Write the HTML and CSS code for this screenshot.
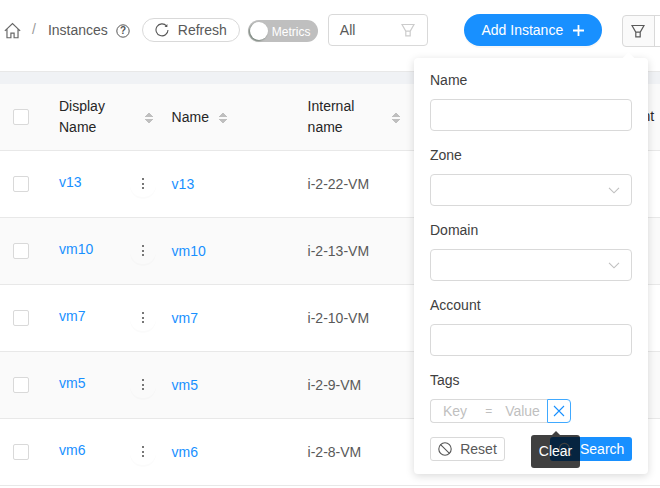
FILE: index.html
```html
<!DOCTYPE html>
<html lang="en">
<head>
    <meta charset="UTF-8">
    <title>Instances</title>
    <link rel="stylesheet" href="styles.css">
</head>
<body>
    <div class="toolbar">
        <svg class="home" viewBox="0 0 16 16" width="17" height="17"><path d="M0.8 8.4 8 1.4l7.2 7M2.8 6.8V14.8h3.7v-4.4h3v4.4h3.7V6.8" fill="none" stroke="#666" stroke-width="1.1"/></svg>
        <span class="sep">/</span>
        <span class="crumb">Instances</span>
        <svg class="help" viewBox="0 0 14 14" width="14" height="14"><circle cx="7" cy="7" r="6.2" fill="none" stroke="#555" stroke-width="1"/><text x="7" y="10.4" text-anchor="middle" class="help-mark">?</text></svg>
        <button class="refresh">
            <svg viewBox="0 0 14 14" width="14" height="14"><path d="M11.6 3A6 6 0 1 0 13 7" fill="none" stroke="#555" stroke-width="1.1"/><path d="M12.4 1v3H9.6z" fill="#555"/></svg>
            Refresh
        </button>
        <div class="switch"><span class="knob"></span><span class="switch-label">Metrics</span></div>
        <div class="select-all">
            <span>All</span>
            <svg viewBox="0 0 14 14" width="14" height="14"><path d="M1 1.5h12L9.2 8.2v4.6H4.8V8.2zM4.8 8.2h4.4" fill="none" stroke="#ccc" stroke-width="1.2"/></svg>
        </div>
        <button class="add">Add Instance <svg viewBox="0 0 11 11" width="11" height="11"><path d="M5.5 0v11M0 5.5h11" stroke="#fff" stroke-width="1.8"/></svg></button>
        <button class="filter-btn"><svg viewBox="0 0 14 14" width="14" height="14"><path d="M1 1.5h12L9.2 8.2v4.6H4.8V8.2zM4.8 8.2h4.4" fill="none" stroke="#595959" stroke-width="1.2"/></svg></button>
        <button class="columns-btn"></button>
    </div>
    <div class="band"></div>

    <table class="tabla">
        <thead>
            <tr>
                <th class="c-check"><span class="check"></span></th>
                <th class="c-display"><div class="th-in"><span>Display<br>Name</span><i class="sorter"></i></div></th>
                <th class="c-name"><div class="th-in"><span>Name</span><i class="sorter"></i></div></th>
                <th class="c-internal"><div class="th-in"><span>Internal<br>name</span><i class="sorter"></i></div></th>
                <th class="c-account"><span>Account</span></th>
            </tr>
        </thead>
        <tbody>
            <tr>
                <td><span class="check"></span></td>
                <td><div class="td-in"><a>v13</a><span class="dots"><i></i></span></div></td>
                <td><a>v13</a></td>
                <td>i-2-22-VM</td>
                <td></td>
            </tr>
            <tr class="alt">
                <td><span class="check"></span></td>
                <td><div class="td-in"><a>vm10</a><span class="dots"><i></i></span></div></td>
                <td><a>vm10</a></td>
                <td>i-2-13-VM</td>
                <td></td>
            </tr>
            <tr>
                <td><span class="check"></span></td>
                <td><div class="td-in"><a>vm7</a><span class="dots"><i></i></span></div></td>
                <td><a>vm7</a></td>
                <td>i-2-10-VM</td>
                <td></td>
            </tr>
            <tr class="alt">
                <td><span class="check"></span></td>
                <td><div class="td-in"><a>vm5</a><span class="dots"><i></i></span></div></td>
                <td><a>vm5</a></td>
                <td>i-2-9-VM</td>
                <td></td>
            </tr>
            <tr>
                <td><span class="check"></span></td>
                <td><div class="td-in"><a>vm6</a><span class="dots"><i></i></span></div></td>
                <td><a>vm6</a></td>
                <td>i-2-8-VM</td>
                <td></td>
            </tr>
        </tbody>
    </table>

    <div class="popover">
        <span class="arrow"></span>
        <label>Name</label>
        <div class="input"></div>
        <label>Zone</label>
        <div class="input"><svg viewBox="0 0 12 12" width="12" height="12"><path d="M1 3.8 6 8.8l5-5" fill="none" stroke="#bfbfbf" stroke-width="1.1"/></svg></div>
        <label>Domain</label>
        <div class="input"><svg viewBox="0 0 12 12" width="12" height="12"><path d="M1 3.8 6 8.8l5-5" fill="none" stroke="#bfbfbf" stroke-width="1.1"/></svg></div>
        <label>Account</label>
        <div class="input"></div>
        <label>Tags</label>
        <div class="tags">
            <div class="tag-box"><span class="tag-key">Key</span><span class="tag-eq">=</span><span class="tag-val">Value</span></div>
            <div class="tag-clear"><svg viewBox="0 0 12 12" width="12" height="12"><path d="M1 1l10 10M11 1 1 11" stroke="#1890ff" stroke-width="1.1"/></svg></div>
        </div>
        <div class="actions">
            <button class="reset">
                <svg viewBox="0 0 14 14" width="14" height="14"><circle cx="7" cy="7" r="6.2" fill="none" stroke="#555" stroke-width="1.1"/><path d="M2.6 2.6l8.8 8.8" stroke="#555" stroke-width="1.1"/></svg>
                Reset
            </button>
            <button class="search">
                <svg viewBox="0 0 14 14" width="14" height="14"><circle cx="6.4" cy="6.4" r="5" fill="none" stroke="#fff" stroke-width="1.1"/><path d="M10 10l3.4 3.4" stroke="#fff" stroke-width="1.1"/></svg>
                Search
            </button>
        </div>
        <div class="tooltip"><span class="tip-arrow"></span>Clear</div>
    </div>
</body>
</html>
```

FILE: styles.css
```css
* {
    box-sizing: border-box;
}
html, body {
    height: 100%;
}
body {
    margin: 0;
    position: relative;
    overflow: hidden;
    background: #fff;
    font-family: "Liberation Sans", Arial, sans-serif;
    font-size: 14px;
    color: #595959;
}
button {
    font-family: inherit;
    font-size: 14px;
}
a {
    color: #1890ff;
}
.toolbar {
    height: 72px;
    padding: 14px 0 0 4px;
    display: flex;
    align-items: flex-start;
    border-bottom: 1px solid #e8e8e8;
    white-space: nowrap;
}
.toolbar > * {
    flex-shrink: 0;
}
.home {
    margin-top: 8px;
}
.sep {
    margin: 7px 0 0 11px;
    color: #999;
}
.crumb {
    margin: 8px 0 0 12px;
}
.help {
    margin: 10px 0 0 8px;
}
.help-mark {
    font-size: 10px;
    font-weight: bold;
    fill: #555;
}
.refresh {
    width: 98px;
    height: 24px;
    margin: 4px 0 0 12px;
    padding: 0;
    display: flex;
    align-items: center;
    justify-content: center;
    gap: 9px;
    background: #fff;
    color: #595959;
    border: 1px solid #d9d9d9;
    border-radius: 12px;
}
.switch {
    width: 70px;
    height: 22px;
    margin: 6px 0 0 8px;
    padding-left: 24px;
    position: relative;
    background: #bfbfbf;
    border-radius: 11px;
    line-height: 22px;
}
.knob {
    position: absolute;
    left: 2px;
    top: 2px;
    width: 18px;
    height: 18px;
    background: #fff;
    border-radius: 50%;
    box-shadow: -1px 1px 2px rgba(0, 35, 11, 0.4);
}
.switch-label {
    color: #fff;
    font-size: 12px;
}
.select-all {
    width: 100px;
    height: 32px;
    margin-left: 10px;
    padding: 0 12px 0 11px;
    display: flex;
    align-items: center;
    justify-content: space-between;
    border: 1px solid #d9d9d9;
    border-radius: 4px;
}
.add {
    width: 138px;
    height: 32px;
    margin-left: 36px;
    padding: 0;
    display: flex;
    align-items: center;
    justify-content: center;
    gap: 10px;
    background: #1890ff;
    color: #fff;
    border: 0;
    border-radius: 16px;
    box-shadow: 0 2px 0 rgba(0, 0, 0, 0.03);
}
.filter-btn, .columns-btn {
    height: 32px;
    margin-top: 1px;
    padding: 0;
    background: #fafafa;
    border: 1px solid #d9d9d9;
}
.filter-btn {
    width: 33px;
    margin-left: 20px;
    display: flex;
    align-items: center;
    justify-content: center;
    border-radius: 4px 0 0 4px;
}
.columns-btn {
    width: 33px;
    margin-left: -1px;
    background: #fff;
}
.band {
    height: 12px;
    background: #f0f2f5;
}
.tabla {
    width: 660px;
    table-layout: fixed;
    border-collapse: collapse;
}
.tabla th, .tabla td {
    padding: 0;
    border-bottom: 1px solid #e8e8e8;
    text-align: left;
    line-height: 21px;
    font-weight: normal;
}
.tabla th {
    height: 66px;
    background: #fafafa;
    color: #262626;
}
.tabla td {
    height: 67px;
    padding-top: 2px;
}
.tabla td:nth-child(-n+2) {
    padding-top: 0;
}
.tabla .alt td {
    background: #fafafa;
}
.c-check {
    width: 59px;
}
.c-display {
    width: 112.6px;
}
.c-name {
    width: 136px;
}
.c-internal {
    width: 296px;
}
.check {
    display: block;
    width: 16px;
    height: 16px;
    margin-left: 13px;
    background: #fff;
    border: 1px solid #d9d9d9;
    border-radius: 2px;
}
.th-in {
    display: flex;
    align-items: center;
}
.c-name .th-in span {
    margin-top: 2px;
}
.c-display .sorter {
    margin-left: 40px;
}
.c-name .sorter {
    margin-left: 10px;
}
.c-internal .sorter {
    margin-left: 38px;
}
.sorter {
    display: block;
    width: 8px;
    height: 12px;
    margin-top: 2px;
    background:
        linear-gradient(to bottom right, transparent 50%, #bfbfbf 50%) 0 0 / 4px 5px no-repeat,
        linear-gradient(to bottom left, transparent 50%, #bfbfbf 50%) 4px 0 / 4px 5px no-repeat,
        linear-gradient(to top right, transparent 50%, #bfbfbf 50%) 0 7px / 4px 5px no-repeat,
        linear-gradient(to top left, transparent 50%, #bfbfbf 50%) 4px 7px / 4px 5px no-repeat;
}
.td-in {
    display: flex;
    align-items: center;
    justify-content: space-between;
}
.td-in a {
    position: relative;
    top: -1px;
}
.dots {
    width: 26px;
    height: 26px;
    margin-right: 15.6px;
    display: flex;
    align-items: center;
    justify-content: center;
    border-radius: 50%;
    box-shadow: 0 2px 0 rgba(0, 0, 0, 0.015);
}
.dots i {
    display: block;
    width: 2px;
    height: 11px;
    background: repeating-linear-gradient(#777 0, #777 2px, transparent 2px, transparent 4.5px);
}
.popover {
    position: absolute;
    left: 414px;
    top: 58px;
    width: 234px;
    height: 416px;
    padding: 12px 16px 0;
    background: #fff;
    border-radius: 4px;
    box-shadow: 0 2px 8px rgba(0, 0, 0, 0.15);
}
.arrow {
    position: absolute;
    left: 210px;
    top: -4px;
    width: 9px;
    height: 9px;
    background: #fff;
    transform: rotate(45deg);
}
.popover label {
    display: block;
    height: 21px;
    line-height: 21px;
    color: #404040;
}
.input {
    width: 202px;
    height: 32px;
    margin: 8px 0 14px;
    padding-right: 11px;
    display: flex;
    align-items: center;
    justify-content: flex-end;
    border: 1px solid #d9d9d9;
    border-radius: 4px;
}
.tags {
    display: flex;
    margin-top: 8px;
    height: 24px;
}
.tag-box {
    width: 117px;
    display: flex;
    align-items: center;
    color: #bfbfbf;
    border: 1px solid #d9d9d9;
    border-right: 0;
    border-radius: 4px 0 0 4px;
}
.tag-key {
    margin-left: 12px;
}
.tag-eq {
    margin-left: 18px;
    font-size: 12px;
}
.tag-val {
    margin-left: 13px;
}
.tag-clear {
    width: 24px;
    display: flex;
    align-items: center;
    justify-content: center;
    border: 1px solid #40a9ff;
    border-radius: 0 4px 4px 0;
}
.actions {
    display: flex;
    justify-content: space-between;
    margin-top: 14px;
}
.reset, .search {
    height: 24px;
    padding: 0;
    display: flex;
    align-items: center;
    border-radius: 3px;
}
.reset {
    width: 75px;
    justify-content: center;
    gap: 8px;
    background: #fff;
    color: #595959;
    border: 1px solid #d9d9d9;
}
.search {
    width: 82px;
    padding-left: 8px;
    gap: 8px;
    background: #1890ff;
    color: #fff;
    border: 0;
}
.tooltip {
    position: absolute;
    left: 117px;
    top: 377px;
    width: 49px;
    height: 33px;
    line-height: 33px;
    text-align: center;
    background: rgba(0, 0, 0, 0.75);
    color: #fff;
    border-radius: 3px;
}
.tip-arrow {
    position: absolute;
    left: 25px;
    top: -4px;
    border-left: 4px solid transparent;
    border-right: 4px solid transparent;
    border-bottom: 4px solid rgba(0, 0, 0, 0.75);
    margin-left: -4px;
}
```
